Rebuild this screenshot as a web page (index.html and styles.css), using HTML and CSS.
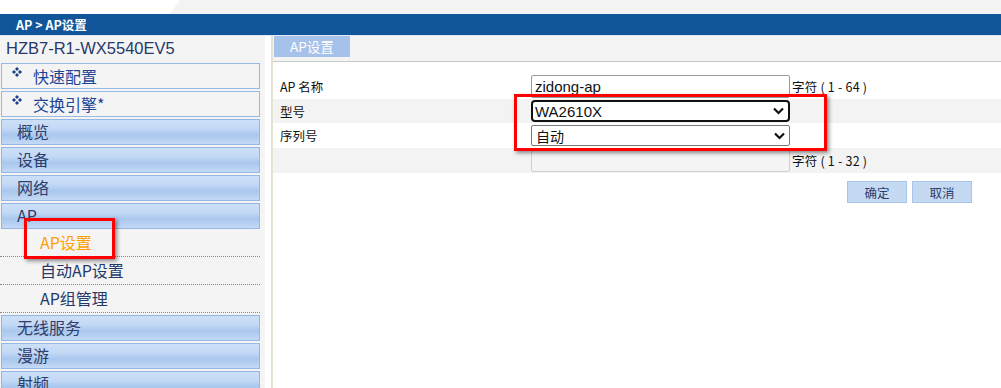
FILE: index.html
```html
<!DOCTYPE html>
<html lang="zh">
<head>
<meta charset="utf-8">
<title>AP设置</title>
<link rel="stylesheet" href="styles.css">
</head>
<body>
<div class="page">
  <div class="topstrip"><div class="topshape"></div></div>
  <div class="crumb">AP &gt; AP设置</div>
  <div class="main">
    <aside class="sidebar">
      <div class="devname">HZB7-R1-WX5540EV5</div>
      <div class="quick"><svg class="dia" width="10" height="10" viewBox="0 0 10 10"><path d="M5 0L7 2L5 4L3 2Z M2 3L4 5L2 7L0 5Z M8 3L10 5L8 7L6 5Z M5 6L7 8L5 10L3 8Z" fill="#1b3f8f"/></svg><span>快速配置</span></div>
      <div class="quick"><svg class="dia" width="10" height="10" viewBox="0 0 10 10"><path d="M5 0L7 2L5 4L3 2Z M2 3L4 5L2 7L0 5Z M8 3L10 5L8 7L6 5Z M5 6L7 8L5 10L3 8Z" fill="#1b3f8f"/></svg><span>交换引擎*</span></div>
      <div class="menu">概览</div>
      <div class="menu">设备</div>
      <div class="menu">网络</div>
      <div class="menu open">AP</div>
      <div class="sub active">AP设置</div>
      <div class="sub">自动AP设置</div>
      <div class="sub">AP组管理</div>
      <div class="menu after-sub">无线服务</div>
      <div class="menu">漫游</div>
      <div class="menu">射频</div>
    </aside>
    <div class="gapcol"></div>
    <section class="content">
      <div class="tabs"><div class="tab">AP设置</div></div>
      <div class="form">
        <div class="row">
          <div class="label">AP 名称</div>
          <div class="field"><input class="txt" type="text" value="zidong-ap"></div>
          <div class="hint">字符 ( 1 - 64 )</div>
        </div>
        <div class="row band short">
          <div class="label">型号</div>
          <div class="field"><div class="sel focus"><span>WA2610X</span><svg width="11" height="8" viewBox="0 0 11 8"><path d="M1 1.5L5.5 6L10 1.5" fill="none" stroke="#111" stroke-width="2.2"/></svg></div></div>
          <div class="hint"></div>
        </div>
        <div class="row">
          <div class="label">序列号</div>
          <div class="field"><div class="sel"><span>自动</span><svg width="11" height="8" viewBox="0 0 11 8"><path d="M1 1.5L5.5 6L10 1.5" fill="none" stroke="#111" stroke-width="2.2"/></svg></div></div>
          <div class="hint"></div>
        </div>
        <div class="row band">
          <div class="label"></div>
          <div class="field"><input class="txt dis" type="text" value=""></div>
          <div class="hint">字符 ( 1 - 32 )</div>
        </div>
        <div class="buttons">
          <button class="btn">确定</button>
          <button class="btn">取消</button>
        </div>
      </div>
    </section>
  </div>
  <div class="mark mark-form"></div>
  <div class="mark mark-menu"></div>
</div>
</body>
</html>
```

FILE: styles.css
```css
* { box-sizing: border-box; }
html, body { margin: 0; padding: 0; background: #fff; }
body { font-family: "Noto Sans CJK SC", "Liberation Sans", sans-serif; }
.page { position: relative; width: 1001px; height: 388px; overflow: hidden; }

.topstrip { height: 14px; display: flex; background: #fff; }
.topshape { margin-left: 170px; flex: 1; background: #f3f3f3; clip-path: polygon(10px 0, 100% 0, 100% 100%, 0 100%); }

.crumb { height: 22px; background: #11569a; color: #fff; font-size: 12.5px; font-weight: bold; padding-left: 16px; line-height: 21px; border-bottom: 1px solid #dfe6ee; }

.main { display: flex; height: 352px; }
.sidebar { width: 265px; background: #f4f4f4; flex: none; }
.gapcol { flex: none; background: #fff; border-right: 2px solid #e7e3d3; width: 8px; }

.devname { height: 27px; padding-left: 6px; font-family: "Liberation Sans", sans-serif; font-size: 16.5px; color: #27396b; line-height: 25px; }

.quick { height: 26px; width: 259px; margin: 0 0 2px 1px; border: 1px solid #98b9e2; background: #f4f4f4; display: flex; align-items: center; padding-left: 10px; color: #1d4595; font-size: 16px; }
.quick .dia { margin-right: 11px; margin-top: -8px; flex: none; }

.menu { height: 26px; width: 259px; margin: 0 0 2px 1px; border: 1px solid #94b7e3; background: linear-gradient(to bottom, #cbdff7 0%, #c4d9f5 35%, #a9c7ee 62%, #c3d9f5 100%); padding-left: 15px; font-size: 16px; color: #2e3d6b; line-height: 23px; }
.menu.open { margin-bottom: 0; }
.menu.after-sub { margin-top: 2px; }

.sub { height: 28px; width: 260px; border-bottom: 1px dotted #8a8a8a; padding-left: 40px; font-size: 16px; color: #27396b; line-height: 27px; }
.sub.active { color: #ff9f00; }

.content { flex: 1; display: flex; flex-direction: column; }
.tabs { height: 26px; background: #f4f4f4; border-bottom: 1px solid #c9c9c9; padding-left: 1px; display: flex; align-items: flex-start; }
.tab { width: 76px; height: 21px; background: #a6c2ea; color: #fff; font-size: 13.5px; text-align: center; line-height: 20px; }

.form { padding-top: 12px; }
.row { display: flex; height: 25px; align-items: center; }
.row.short { height: 24px; }
.row.band { background: #f3f3f3; }
.label { width: 258px; padding-left: 7px; font-size: 12.5px; color: #111; flex: none; }
.field { width: 259px; flex: none; }
.hint { padding-left: 2px; font-size: 12.5px; color: #111; font-family: "Noto Sans CJK SC", sans-serif; letter-spacing: 0.2px; }

.txt { width: 259px; height: 23px; border: 1px solid #9a9a9a; border-radius: 2px; font-family: "Liberation Sans", sans-serif; font-size: 15px; padding: 0 0 0 3px; color: #111; background: #fff; display: block; }
.txt.dis { border-color: #cfcfcf; background: #f4f4f4; height: 22px; }

.sel { width: 259px; height: 21px; border: 1px solid #7a7a7a; border-radius: 2px; background: #fff; display: flex; align-items: center; justify-content: space-between; padding: 0 4px 0 4px; font-size: 14px; color: #111; font-family: "Liberation Sans", "Noto Sans CJK SC", sans-serif; }
.sel.focus { border: 2px solid #111; border-radius: 4px; padding-left: 2px; height: 22px; font-size: 15px; }

.buttons { display: flex; justify-content: flex-end; gap: 5px; padding: 8px 29px 0 0; }
.btn { width: 60px; height: 22px; background: #c6d9f3; border: 1px solid #a9c4ea; color: #2b3d6b; font-family: "Noto Sans CJK SC", sans-serif; font-size: 12.5px; padding: 0; }

.mark { position: absolute; border: 3px solid #f00; box-shadow: 2px 2px 4px rgba(0,0,0,.45); }
.mark-form { left: 514px; top: 94px; width: 313px; height: 57px; }
.mark-menu { left: 24px; top: 218px; width: 91px; height: 41px; }
```
